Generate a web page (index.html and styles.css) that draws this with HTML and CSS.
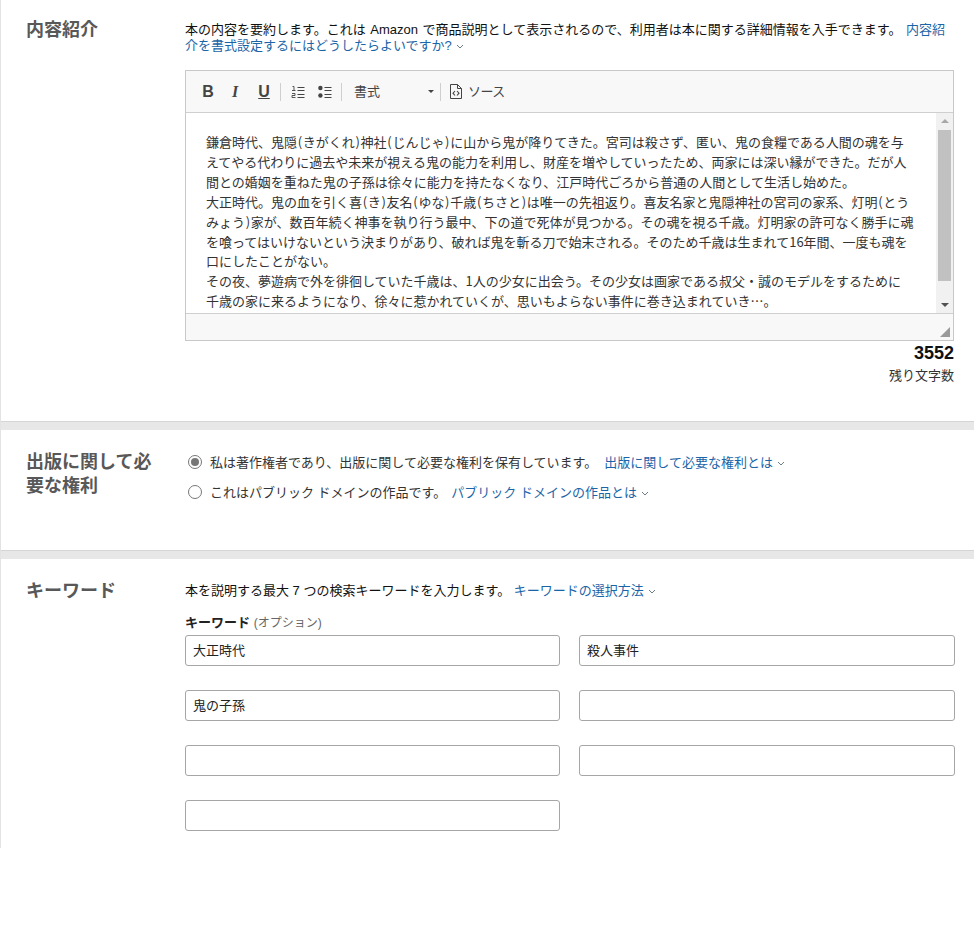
FILE: index.html
```html
<!DOCTYPE html>
<html lang="ja">
<head>
  <meta charset="UTF-8" />
  <title>本の詳細</title>
  <link rel="stylesheet" href="styles.css">
</head>
<body>

  <div class="page">

    <section class="section section-desc">
      <h2 class="section-title">内容紹介</h2>
      <div class="section-body">
        <p class="help">本の内容を要約します。これは Amazon で商品説明として表示されるので、利用者は本に関する詳細情報を入手できます。 <a class="link" href="#">内容紹<br>介を書式設定するにはどうしたらよいですか?<svg class="chev" width="8" height="5" viewBox="0 0 8 5"><path d="M1 1l3 3 3-3" fill="none" stroke="#6b7c88" stroke-width="1"/></svg></a></p>

        <div class="editor">
          <div class="toolbar">
            <span class="tool tool-b">B</span>
            <span class="tool tool-i">I</span>
            <span class="tool tool-u">U</span>
            <span class="sep"></span>
            <svg class="icon icon-ol" width="14" height="14" viewBox="0 0 14 14">
              <path d="M1.5 1.5h1.5v4M1 5.5h3.5M1 8.5h3v2H1v2h3.5" fill="none" stroke="#444" stroke-width="0.9"/>
              <path d="M6.5 2.5h7M6.5 5.5h7M6.5 9.5h7M6.5 12.5h7" stroke="#444" stroke-width="1.1"/>
            </svg>
            <svg class="icon icon-ul" width="14" height="14" viewBox="0 0 14 14">
              <circle cx="2.4" cy="3" r="2.2" fill="#444"/>
              <circle cx="2.4" cy="10.5" r="2.2" fill="#444"/>
              <path d="M6.5 2.5h7M6.5 5.5h7M6.5 9.5h7M6.5 12.5h7" stroke="#444" stroke-width="1.1"/>
            </svg>
            <span class="sep"></span>
            <span class="format">書式<i class="caret"></i></span>
            <span class="sep"></span>
            <span class="source">
              <svg width="12" height="15" viewBox="0 0 12 15">
                <path d="M1 .5h6.5l4 4v10H.5V.5z" fill="none" stroke="#444"/>
                <path d="M7.5.5v4h4" fill="none" stroke="#444"/>
                <path d="M5 7L3 9.2l2 2.3M7 7l2 2.2L7 11.5" fill="none" stroke="#444" stroke-width="1.1"/>
              </svg>
              ソース
            </span>
          </div>
          <div class="editor-body">
            <div class="editor-text">鎌倉時代、鬼隠<span class="pr">(</span>きがくれ<span class="pr">)</span>神社<span class="pr">(</span>じんじゃ<span class="pr">)</span>に山から鬼が降りてきた。宮司は殺さず、匿い、鬼の食糧である人間の魂を与<br>えてやる代わりに過去や未来が視える鬼の能力を利用し、財産を増やしていったため、両家には深い縁ができた。だが人<br>間との婚姻を重ねた鬼の子孫は徐々に能力を持たなくなり、江戸時代ごろから普通の人間として生活し始めた。<br>大正時代。鬼の血を引く喜<span class="pr">(</span>き<span class="pr">)</span>友名<span class="pr">(</span>ゆな<span class="pr">)</span>千歳<span class="pr">(</span>ちさと<span class="pr">)</span>は唯一の先祖返り。喜友名家と鬼隠神社の宮司の家系、灯明<span class="pr">(</span>とう<br>みょう<span class="pr">)</span>家が、数百年続く神事を執り行う最中、下の道で死体が見つかる。その魂を視る千歳。灯明家の許可なく勝手に魂<br>を喰ってはいけないという決まりがあり、破れば鬼を斬る刀で始末される。そのため千歳は生まれて16年間、一度も魂を<br>口にしたことがない。<br>その夜、夢遊病で外を徘徊していた千歳は、1人の少女に出会う。その少女は画家である叔父・誠のモデルをするために<br>千歳の家に来るようになり、徐々に惹かれていくが、思いもよらない事件に巻き込まれていき…。</div>
            <div class="scrollbar">
              <i class="arrow-up"></i>
              <div class="thumb"></div>
              <i class="arrow-down"></i>
            </div>
          </div>
          <div class="editor-foot"><i class="resize"></i></div>
        </div>

        <div class="counter">
          <strong>3552</strong>
          <span>残り文字数</span>
        </div>
      </div>
    </section>

    <section class="section section-rights">
      <h2 class="section-title">出版に関して必要な権利</h2>
      <div class="section-body">
        <div class="radio-row">
          <span class="radio checked"></span>
          <span>私は著作権者であり、出版に関して必要な権利を保有しています。</span>
          <a class="link" href="#">出版に関して必要な権利とは<svg class="chev" width="8" height="5" viewBox="0 0 8 5"><path d="M1 1l3 3 3-3" fill="none" stroke="#6b7c88" stroke-width="1"/></svg></a>
        </div>
        <div class="radio-row radio-row-pd">
          <span class="radio"></span>
          <span>これはパブリック ドメインの作品です。</span>
          <a class="link" href="#">パブリック ドメインの作品とは<svg class="chev" width="8" height="5" viewBox="0 0 8 5"><path d="M1 1l3 3 3-3" fill="none" stroke="#6b7c88" stroke-width="1"/></svg></a>
        </div>
      </div>
    </section>

    <section class="section section-keywords">
      <h2 class="section-title">キーワード</h2>
      <div class="section-body">
        <p class="help">本を説明する最大 7 つの検索キーワードを入力します。 <a class="link" href="#">キーワードの選択方法<svg class="chev" width="8" height="5" viewBox="0 0 8 5"><path d="M1 1l3 3 3-3" fill="none" stroke="#6b7c88" stroke-width="1"/></svg></a></p>
        <div class="kw-label"><b>キーワード</b> <span>(オプション)</span></div>
        <div class="kw-grid">
          <input class="kw-input" type="text" value="大正時代">
          <input class="kw-input" type="text" value="殺人事件">
          <input class="kw-input" type="text" value="鬼の子孫">
          <input class="kw-input" type="text">
          <input class="kw-input" type="text">
          <input class="kw-input" type="text">
          <input class="kw-input" type="text">
        </div>
      </div>
    </section>

  </div>

</body>
</html>
```

FILE: styles.css
```css
body {
  font-family: "Liberation Sans", "Noto Sans CJK JP", sans-serif;
  font-size: 13px;
  color: #111;
  background: white;
  margin: 0;
  padding: 0;
}

.page {
  width: 974px;
  height: 848px;
  overflow: hidden;
  box-sizing: border-box;
  border-left: 1px solid #e3e3e3;
  background: #e7e7e7;
  display: flex;
  flex-direction: column;
  gap: 8px;
}

.section {
  display: flex;
  background: white;
  border-bottom: 1px solid #d5d5d5;
  padding-left: 25px;
  box-sizing: border-box;
}

.section-desc {
  height: 422px;
  padding-top: 18px;
}

.section-rights {
  height: 121px;
  padding-top: 16px;
}

.section-keywords {
  flex: 1;
  border-bottom: none;
  padding-top: 20px;
}

.section-title {
  width: 159px;
  flex: none;
  box-sizing: border-box;
  padding-right: 28px;
  margin: 0;
  font-size: 18px;
  line-height: 24px;
  font-weight: bold;
  color: #585858;
}

.section-rights .section-title {
  padding-top: 4px;
}

.section-body {
  width: 770px;
}

.help {
  margin: 4px 0 0;
  line-height: 16px;
  white-space: nowrap;
}

.section-desc .help {
  word-spacing: 1px;
}

.link {
  color: #1a65a8;
  text-decoration: none;
}

.chev {
  margin-left: 4px;
  vertical-align: 1px;
}

/* editor */
.editor {
  margin-top: 16px;
  width: 769px;
  height: 271px;
  box-sizing: border-box;
  border: 1px solid #c8c8c8;
}

.toolbar {
  height: 42px;
  box-sizing: border-box;
  background: #f8f8f8;
  border-bottom: 1px solid #cfcfcf;
  display: flex;
  align-items: center;
  padding-left: 16px;
  color: #444;
}

.tool {
  width: 12px;
  text-align: center;
  font-size: 16px;
  font-weight: bold;
  color: #444;
  font-family: "Liberation Sans", sans-serif;
}

.tool-b {
  margin-right: 15px;
}

.tool-i {
  margin-right: 17px;
  font-style: italic;
  font-family: "Liberation Serif", serif;
}

.tool-u {
  text-decoration: underline;
  margin-right: 10px;
}

.sep {
  width: 1px;
  height: 18px;
  background: #cfcfcf;
}

.icon-ol {
  margin-left: 10px;
}

.icon-ul {
  margin-left: 13px;
  margin-right: 9px;
}

.format {
  width: 86px;
  margin-left: 12px;
  margin-bottom: 3px;
  display: flex;
  align-items: center;
  justify-content: space-between;
  padding-right: 6px;
  box-sizing: border-box;
}

.caret {
  border: 3px solid transparent;
  border-top: 3px solid #444;
  margin-top: 6px;
}

.source {
  margin-left: 9px;
  margin-bottom: 3px;
  display: flex;
  align-items: center;
  gap: 6px;
  letter-spacing: -0.5px;
}

.source svg {
  margin-top: 2px;
}

.editor-body {
  height: 201px;
  display: flex;
  justify-content: space-between;
  border-bottom: 1px solid #cfcfcf;
  box-sizing: border-box;
  background: white;
}

.editor-text {
  font-family: "Noto Sans CJK JP", sans-serif;
  padding: 19px 0 0 20px;
  line-height: 19.9px;
  color: #333;
  white-space: nowrap;
}

.pr {
  padding: 0 0.7px;
}

.scrollbar {
  width: 17px;
  background: #f1f1f1;
  display: flex;
  flex-direction: column;
  align-items: center;
  justify-content: space-between;
  flex: none;
  padding: 6px 0;
  box-sizing: border-box;
  position: relative;
}

.thumb {
  position: absolute;
  left: 2px;
  top: 17px;
  width: 13px;
  height: 151px;
  background: #c1c1c1;
}

.arrow-up {
  border: 4px solid transparent;
  border-top: none;
  border-bottom: 4px solid #a8a8a8;
}

.arrow-down {
  border: 4px solid transparent;
  border-bottom: none;
  border-top: 4px solid #505050;
}

.editor-foot {
  height: 26px;
  background: #f8f8f8;
  position: relative;
}

.resize {
  position: absolute;
  right: 3px;
  bottom: 3px;
  border-style: solid;
  border-width: 0 0 10px 10px;
  border-color: transparent transparent #9a9a9a transparent;
}

.counter {
  display: flex;
  flex-direction: column;
  align-items: flex-end;
  width: 769px;
}

.counter strong {
  font-size: 18px;
  line-height: 24px;
  color: #111;
}

.counter span {
  font-size: 13px;
  line-height: 22px;
  color: #333;
}

/* radios */
.radio-row {
  display: flex;
  align-items: center;
  height: 30px;
  padding-left: 3px;
  gap: 8px;
  white-space: nowrap;
  color: #333;
}

.radio-row .link {
  margin-left: -1px;
}

.radio-row-pd .link {
  margin-left: -3px;
}

.radio {
  width: 14px;
  height: 14px;
  margin-top: 1px;
  box-sizing: border-box;
  border: 1px solid #777;
  border-radius: 50%;
  background: white;
  flex: none;
  display: flex;
  align-items: center;
  justify-content: center;
}

.radio.checked::after {
  content: "";
  width: 8px;
  height: 8px;
  border-radius: 50%;
  background: #777;
}

/* keywords */
.kw-label {
  margin-top: 16px;
  height: 16px;
  line-height: 16px;
}

.kw-label b {
  color: #222;
}

.kw-label span {
  color: #666;
  font-size: 12px;
}

.kw-grid {
  display: grid;
  grid-template-columns: 375px 376px;
  column-gap: 19px;
  row-gap: 24px;
  margin-top: 4px;
}

.kw-input {
  height: 31px;
  box-sizing: border-box;
  border: 1px solid #a6a6a6;
  border-radius: 3px;
  padding: 0 7px 2px;
  font-family: inherit;
  font-size: 13px;
  color: #222;
}
```
